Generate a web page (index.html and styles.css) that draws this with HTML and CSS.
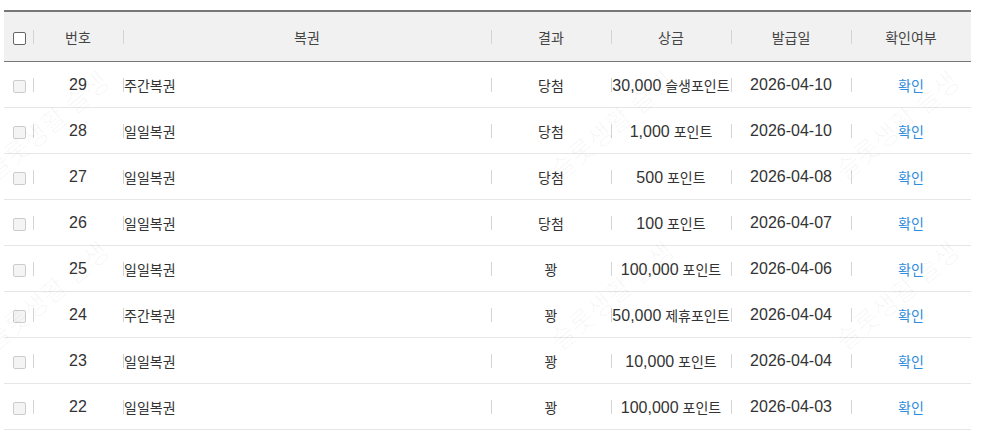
FILE: index.html
```html
<!DOCTYPE html>
<html lang="ko">
<head>
<meta charset="utf-8">
<link rel="stylesheet" href="styles.css">
</head>
<body>
<div class="page">
  <table class="list">
    <colgroup>
      <col class="c-chk"><col class="c-no"><col class="c-name"><col class="c-res"><col class="c-prize"><col class="c-date"><col class="c-view">
    </colgroup>
    <thead>
      <tr>
        <th><span class="chk chk-head"></span></th>
        <th class="sep">번호</th>
        <th class="sep">복권</th>
        <th class="sep">결과</th>
        <th class="sep">상금</th>
        <th class="sep">발급일</th>
        <th class="sep">확인여부</th>
      </tr>
    </thead>
    <tbody>
      <tr><td><span class="chk"></span></td><td class="sep num">29</td><td class="sep name">주간복권</td><td class="sep">당첨</td><td class="sep"><span class="num">30,000</span> 슬생포인트</td><td class="sep num">2026-04-10</td><td class="sep"><a class="link">확인</a></td></tr>
      <tr><td><span class="chk"></span></td><td class="sep num">28</td><td class="sep name">일일복권</td><td class="sep">당첨</td><td class="sep"><span class="num">1,000</span> 포인트</td><td class="sep num">2026-04-10</td><td class="sep"><a class="link">확인</a></td></tr>
      <tr><td><span class="chk"></span></td><td class="sep num">27</td><td class="sep name">일일복권</td><td class="sep">당첨</td><td class="sep"><span class="num">500</span> 포인트</td><td class="sep num">2026-04-08</td><td class="sep"><a class="link">확인</a></td></tr>
      <tr><td><span class="chk"></span></td><td class="sep num">26</td><td class="sep name">일일복권</td><td class="sep">당첨</td><td class="sep"><span class="num">100</span> 포인트</td><td class="sep num">2026-04-07</td><td class="sep"><a class="link">확인</a></td></tr>
      <tr><td><span class="chk"></span></td><td class="sep num">25</td><td class="sep name">일일복권</td><td class="sep">꽝</td><td class="sep"><span class="num">100,000</span> 포인트</td><td class="sep num">2026-04-06</td><td class="sep"><a class="link">확인</a></td></tr>
      <tr><td><span class="chk"></span></td><td class="sep num">24</td><td class="sep name">주간복권</td><td class="sep">꽝</td><td class="sep"><span class="num">50,000</span> 제휴포인트</td><td class="sep num">2026-04-04</td><td class="sep"><a class="link">확인</a></td></tr>
      <tr><td><span class="chk"></span></td><td class="sep num">23</td><td class="sep name">일일복권</td><td class="sep">꽝</td><td class="sep"><span class="num">10,000</span> 포인트</td><td class="sep num">2026-04-04</td><td class="sep"><a class="link">확인</a></td></tr>
      <tr><td><span class="chk"></span></td><td class="sep num">22</td><td class="sep name">일일복권</td><td class="sep">꽝</td><td class="sep"><span class="num">100,000</span> 포인트</td><td class="sep num">2026-04-03</td><td class="sep"><a class="link">확인</a></td></tr>
    </tbody>
  </table>
  <div class="watermark" aria-hidden="true">
    <span class="wm wm1">슬롯생활 슬생</span>
    <span class="wm wm2">슬롯생활 슬생</span>
    <span class="wm wm3">슬롯생활 슬생</span>
    <span class="wm wm4">슬롯생활 슬생</span>
    <span class="wm wm5">슬롯생활 슬생</span>
    <span class="wm wm6">슬롯생활 슬생</span>
  </div>
</div>
</body>
</html>
```

FILE: styles.css
```css
html, body {
  margin: 0;
  padding: 0;
  background: #fff;
}
body {
  font-family: "Noto Sans CJK KR", "Noto Sans", sans-serif;
  font-size: 14px;
  color: #333;
}
.page {
  position: relative;
  width: 987px;
  height: 430px;
  overflow: hidden;
  padding: 10px 0 0 4px;
  box-sizing: border-box;
}
.list {
  width: 967px;
  table-layout: fixed;
  border-collapse: collapse;
  border-top: 2px solid #777;
}
.c-chk { width: 29px; }
.c-no { width: 90px; }
.c-name { width: 368px; }
.c-res, .c-prize, .c-date, .c-view { width: 120px; }

.list th {
  height: 49px;
  padding: 0;
  background: #f1f1f1;
  font-weight: normal;
  color: #444;
  border-bottom: 1px solid #777;
  text-align: center;
  position: relative;
}
.list td {
  height: 45px;
  padding: 0;
  text-align: center;
  border-bottom: 1px solid #e6e6e6;
  white-space: nowrap;
  position: relative;
}
.list td.name { text-align: left; padding-left: 1px; }
.num {
  font-family: "Liberation Sans", "Noto Sans CJK KR", sans-serif;
  font-size: 16px;
}
.sep::before {
  content: "";
  position: absolute;
  left: 0;
  top: 50%;
  height: 14px;
  margin-top: -7px;
  border-left: 1px solid #d4d4d4;
}
.chk {
  display: inline-block;
  width: 11px;
  height: 11px;
  border: 1px solid #ccc;
  border-radius: 2px;
  background: #f4f4f4;
  vertical-align: middle;
  margin-left: 1px;
}
.chk-head {
  border-color: #666;
  background: #fff;
}
.link {
  color: #2f8ddc;
  text-decoration: none;
}
.watermark {
  position: absolute;
  inset: 0;
  pointer-events: none;
}
.wm {
  position: absolute;
  font-size: 26px;
  color: rgba(0, 0, 0, 0.03);
  transform: rotate(-40deg);
  transform-origin: left bottom;
  white-space: nowrap;
}
.wm1 { left: 0; top: 150px; }
.wm2 { left: 565px; top: 150px; }
.wm3 { left: 850px; top: 150px; }
.wm4 { left: 0; top: 320px; }
.wm5 { left: 565px; top: 320px; }
.wm6 { left: 850px; top: 320px; }
```
